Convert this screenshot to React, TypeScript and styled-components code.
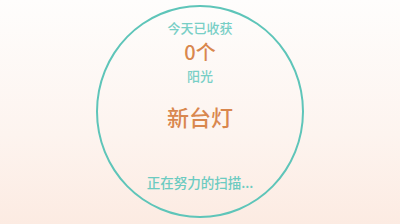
import React from "react";
import styled, { createGlobalStyle } from "styled-components";

const GlobalStyle = createGlobalStyle`
  html, body {
    margin: 0;
    padding: 0;
  }
  body {
    font-family: "Noto Sans CJK SC", "Noto Sans", sans-serif;
  }
`;

const Screen = styled.div`
  width: 400px;
  height: 224px;
  display: flex;
  justify-content: center;
  padding-top: 5px;
  box-sizing: border-box;
  background: linear-gradient(180deg, #fefdfc 0%, #fdf4ef 60%, #fcebe2 100%);
`;

const Ring = styled.div`
  width: 208px;
  height: 213px;
  box-sizing: border-box;
  border: 2px solid #5ec5b9;
  border-radius: 50%;
  display: flex;
  flex-direction: column;
  align-items: center;
  padding-top: 11px;
`;

const Label = styled.div`
  color: #78cfc6;
  font-size: 13px;
  font-weight: 500;
  line-height: 19px;
`;

const Value = styled.div<{ size: number; top?: number }>`
  color: #d9874e;
  font-size: ${(p) => p.size}px;
  font-weight: 500;
  line-height: ${(p) => Math.ceil(p.size * 1.45)}px;
  margin-top: ${(p) => p.top ?? 0}px;
`;

const Status = styled.div`
  color: #6ccbc1;
  font-size: 13.5px;
  font-weight: 500;
  line-height: 20px;
  margin-top: 40px;
`;

const App: React.FC = () => {
  return (
    <>
      <GlobalStyle />
      <Screen>
        <Ring>
          <Label>今天已收获</Label>
          <Value size={20}>0个</Value>
          <Label>阳光</Label>
          <Value size={22} top={15}>新台灯</Value>
          <Status>正在努力的扫描...</Status>
        </Ring>
      </Screen>
    </>
  );
};

export default App;
